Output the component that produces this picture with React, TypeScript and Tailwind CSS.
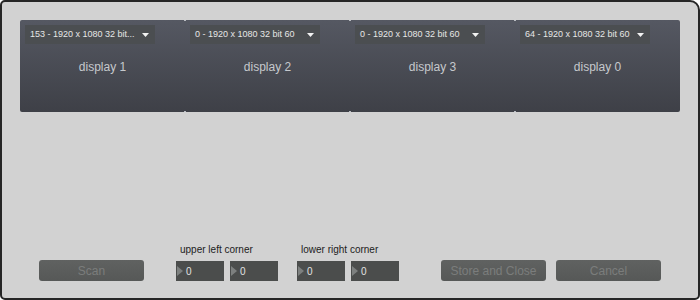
import React from "react";

interface Display {
    mode: string;
    name: string;
}

const displays: Display[] = [
    { mode: "153 - 1920 x 1080 32 bit...", name: "display 1" },
    { mode: "0 - 1920 x 1080 32 bit 60", name: "display 2" },
    { mode: "0 - 1920 x 1080 32 bit 60", name: "display 3" },
    { mode: "64 - 1920 x 1080 32 bit 60", name: "display 0" },
];

const DisplayColumn: React.FC<{ d: Display; first: boolean }> = ({ d, first }) => (
    <div className="relative flex flex-col px-[5px] pt-[5px]">
        {!first && (
            <>
                <span className="absolute -left-[1px] top-0 h-[1px] w-[2px] bg-[#b9bcc2]" />
                <span className="absolute -left-[1px] bottom-0 h-[1px] w-[2px] bg-[#b9bcc2]" />
            </>
        )}
        <div className="flex h-[19px] w-[130px] items-center justify-between bg-[#4b4e51] pl-[5px] pr-[6px] text-[9px] text-[#e6e6e6]">
            <span>{d.mode}</span>
            <svg width="7" height="4" viewBox="0 0 7 4">
                <polygon points="0,0 7,0 3.5,4" fill="#f2f2f2" />
            </svg>
        </div>
        <div className="mt-[14px] text-center text-[12px] text-[#c6c9cd]">{d.name}</div>
    </div>
);

const NumberBox: React.FC<{ value: string }> = ({ value }) => (
    <div className="flex h-[20px] w-[48px] items-center bg-[#4b4d4c] pl-[1px]">
        <svg width="7" height="10" viewBox="0 0 7 10">
            <polygon points="0,0 6,5 0,10" fill="#7d807f" />
        </svg>
        <span className="ml-[2px] text-[10px] text-[#e2e2e2]">{value}</span>
    </div>
);

const DimButton: React.FC<{ label: string; className?: string }> = ({ label, className }) => (
    <button
        className={
            "h-[21px] w-[105px] rounded-[3px] bg-gradient-to-b from-[#606261] to-[#565857] text-[12px] text-[#7b7d7c] " +
            (className ?? "")
        }
    >
        {label}
    </button>
);

export default function App() {
    return (
        <div
            className="flex h-[300px] w-[700px] flex-col rounded-[5px] rounded-tr-[10px] border-2 border-[#262626] bg-[#d2d2d2]"
            style={{ fontFamily: '"Liberation Sans", Arial, sans-serif' }}
        >
            {/* display panels */}
            <div className="mx-[18px] mt-[18px] grid h-[92px] grid-cols-4 rounded-[2px] bg-gradient-to-b from-[#555862] to-[#3e4047]">
                {displays.map((d, i) => (
                    <DisplayColumn key={i} d={d} first={i === 0} />
                ))}
            </div>

            {/* bottom controls */}
            <div className="mt-auto mb-[17px] flex items-end pl-[37px]">
                <DimButton label="Scan" />

                <div className="ml-[32px] flex flex-col">
                    <span className="mb-[4px] pl-[4px] text-[10px] text-[#1c1c1c]">upper left corner</span>
                    <div className="flex gap-[6px]">
                        <NumberBox value="0" />
                        <NumberBox value="0" />
                    </div>
                </div>

                <div className="ml-[19px] flex flex-col">
                    <span className="mb-[4px] pl-[4px] text-[10px] text-[#1c1c1c]">lower right corner</span>
                    <div className="flex gap-[6px]">
                        <NumberBox value="0" />
                        <NumberBox value="0" />
                    </div>
                </div>

                <DimButton label="Store and Close" className="ml-[42px]" />
                <DimButton label="Cancel" className="ml-[10px]" />
            </div>
        </div>
    );
}
